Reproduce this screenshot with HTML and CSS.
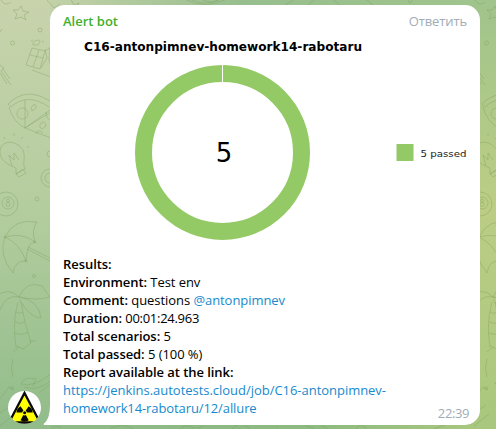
FILE: index.html
```html
<!DOCTYPE html>
<html lang="en">
<head>
<meta charset="utf-8">
<title>Alert bot</title>
<link rel="stylesheet" href="styles.css">
</head>
<body>
<main class="chat">
  <svg class="wallpaper" viewBox="0 0 496 429" aria-hidden="true">
    <defs>
      <g id="doodles">
        <path d="M1 0q4 7 10 2M47 0l7 8 6-4"/>
        <path d="M21 6l2 5 6 1-5 3 2 5-5-3-6 2 2-5-4-4 5 0z"/>
        <circle cx="40" cy="30" r="2"/><circle cx="12.500" cy="43" r="2"/><path d="M0 32l2-3"/>
        <path d="M33 45q-1-4 5-5 4 1 0 5zM31 41l2-1M42 41l2 1"/>
        <path d="M32 48l13 3-5 18-14-4zM30 55l13 3M39 50l-6 17M45 51l6-4 1 4M32 70l27 10M41 68l6-10-2-9M50 47l-1 12 2 9"/>
        <path d="M0 65l4 3-3 3 10 14M0 73l7 11M3 69l7 10"/>
        <path d="M8 104Q26 86 50 101L59 108M8 104l3 3Q27 92 49 107M9 107Q13 122 25 128L51 138M25 100v28l25-18M25 128l26-16"/>
        <circle cx="22.500" cy="113.500" r="5.500"/><path d="M33 105q4-1 3 3l-4 3q-2-4 1-6M41 123q4-3 5 3l-4 3q-4-2-1-6M46 112q0 7 5 8M36 134q2-6 7-1"/>
        <path d="M16 168C6 164-3 158 1 147 6 139 18 142 23 150c3 8-1 13 2 19l-9 5zM12 166l-3-11 5 5 0-7 5 7M16 174l7-5 3 4-7 4z"/>
        <path d="M4 137l1 2M14 133v3M23 137l-2 2M27 147l2 0"/>
        <circle cx="50" cy="154" r="3"/><circle cx="50" cy="178" r="9"/><circle cx="50" cy="178" r="5"/>
        <circle cx="6" cy="204" r="12"/><circle cx="8" cy="203" r="6"/><circle cx="8" cy="200.500" r="1.500"/><circle cx="8" cy="204.500" r="2"/><circle cx="37" cy="199" r="2"/>
        <path d="M5 237Q14 218 37 222Q31 230 35 242Q27 242 26 261Q15 260 13 273Q-2 255 5 237Q20 244 26 261M5 237Q22 232 35 242M27 249l23 12M28 247l22 11"/>
        <circle cx="5" cy="237" r="1"/><circle cx="35" cy="242" r="1"/><circle cx="26" cy="261" r="1"/><circle cx="34" cy="276" r="1.500"/>
        <path d="M19 297Q8 286-4 297M19 297Q6 294 0 310M19 297Q26 280 42 286L50 297Q38 301 19 297Q39 300 41 318Q30 318 19 299M18 302q-6 20-2 45M21 302q3 20 10 41l-8 6-7-3M16 312q4 3 7 0M15 322q6 3 10 0M15 333q7 3 13-1M13 352l6-5M30 341l6 0M13 359q-3 9 0 18"/>
        <circle cx="12" cy="388" r="1.500"/><path d="M21 384q3-8 15-5l-3 7M21 384q13 4 31-11M24 387q14 5 28-7M0 399l9-12 5 3M0 413l12-8M39 393l12-9M0 426l15-12"/>
      </g>
    </defs>
    <use href="#doodles"/>
    <use href="#doodles" x="474"/>
    <path d="M71 0l3 5 5-2-1 2M187 0q18 9 38 0M192 0q15 6 26 0M203 0q8 4 16 0M285 5l9-5M308 5l6-5M340 5l-7-5M408 0q2 6 4 0M367 0l6 5"/>
    <path d="M51 429q4-5 10-1M110 429q12-7 24 0M180 429q5-6 14-1M197 429l9-5M232 429q8-8 14-3l4 3M276 427h2M305 425l9 4M321 425l7 4M356 429q5-8 10 0M433 429l12-4"/>
  </svg>
  <svg class="avatar" viewBox="0 0 34 34" role="img" aria-label="Alert bot avatar">
    <defs><clipPath id="face"><circle cx="16.500" cy="16.500" r="16.500"/></clipPath></defs>
    <circle cx="16.500" cy="16.500" r="16.500" fill="#fff"/>
    <g clip-path="url(#face)">
      <path d="M16.500 2L32 31.500H1z" fill="#ff0" stroke="#080808" stroke-width="2.300"/>
      <path d="M14.300 21.500H8.500A8 8 0 0 1 12.500 15.200L15.500 19.500A2.500 2.500 0 0 0 14.300 21.500M18.700 21.500h6A8 8 0 0 0 20.700 15.200L17.700 19.500A2.500 2.500 0 0 1 18.700 21.500M15.300 24L12.500 29.200A8 8 0 0 0 20.700 29.200L17.900 24A2.500 2.500 0 0 1 15.300 24" fill="#080808"/>
      <circle cx="16.600" cy="21.700" r="1.500" fill="#080808"/>
    </g>
  </svg>
  <article class="bubble">
    <svg class="tail" viewBox="0 0 9 20" aria-hidden="true"><path d="M9 0V20H2Q0 20 1 18.500Q7 14 7 0z"/></svg>
    <header class="head"><span class="name">Alert bot</span><span class="reply">Ответить</span></header>
    <svg class="chart" viewBox="0 0 404 220">
      <text class="title" x="21" y="15.500" textLength="278" lengthAdjust="spacingAndGlyphs">C16-antonpimnev-homework14-rabotaru</text>
      <circle class="ring" cx="159.500" cy="117.500" r="79"/>
      <path class="split" d="M159.500 30v17"/>
      <text class="total" x="161" y="127" text-anchor="middle">5</text>
      <rect class="key" x="333.500" y="109" width="17" height="17"/>
      <text class="legend" x="357.500" y="122" textLength="46" lengthAdjust="spacingAndGlyphs">5 passed</text>
    </svg>
    <div class="message">
      <div><b>Results:</b></div>
      <div><b>Environment:</b> Test env</div>
      <div><b>Comment:</b> questions <a>@antonpimnev</a></div>
      <div><b>Duration:</b> <span class="digits">00:01:24.963</span></div>
      <div><b>Total scenarios:</b> 5</div>
      <div><b>Total passed:</b> 5 (100 %)</div>
      <div><b>Report available at the link:</b></div>
      <div><a class="url">https://jenkins.autotests.cloud/job/C16-antonpimnev-<br><span class="url-end">homework14-rabotaru/12/allure</span></a></div>
    </div>
    <time class="time">22:39</time>
  </article>
</main>
</body>
</html>
```
FILE: styles.css
```css
* { box-sizing: border-box; }
body { margin: 0; font: 13px/18px "Open Sans", sans-serif; color: #000; }
.chat {
  position: relative;
  display: flex;
  align-items: flex-end;
  width: 496px;
  height: 429px;
  padding: 5px 16px 4px 8px;
  overflow: hidden;
  background:
    linear-gradient(#a0c48c 0%, #bccd84 48%, #a9c77e 100%) right / 16px 100% no-repeat,
    linear-gradient(90deg, #c3d1a9 0%, #97be8e 45%, #a0c48c 100%) 50px 0 / 430px 20px no-repeat,
    linear-gradient(90deg, #8fbb88 0%, #8cba80 60%, #a9c77e 100%) 50px 100% / 430px 20px no-repeat,
    linear-gradient(#c8d3ac 0%, #b4cd9f 48%, #91bc8a 100%);
}
.wallpaper {
  position: absolute;
  inset: 0;
  width: 496px;
  height: 429px;
  fill: none;
  stroke: #7f9f61;
  stroke-opacity: .4;
  stroke-width: 1;
}
.avatar { position: relative; width: 34px; height: 34px; margin-right: 8px; flex: none; }
.bubble {
  position: relative;
  width: 430px;
  height: 420px;
  padding: 7px 13px;
  background: #fff;
  border-radius: 15px 15px 15px 0;
}
.tail { position: absolute; left: -7px; bottom: 0; width: 9px; height: 20px; fill: #fff; }
.head { display: flex; justify-content: space-between; height: 18px; }
.name { color: #42b02d; font-weight: 600; }
.reply { color: #a0acb6; letter-spacing: -.1px; }
.chart { display: block; width: 404px; height: 220px; margin-top: 5px; overflow: visible; font-family: "DejaVu Sans", sans-serif; }
.title { font-size: 11.5px; font-weight: 700; }
.ring { fill: none; stroke: #94ca66; stroke-width: 17; }
.split { stroke: #fff; stroke-width: 1; }
.total { font-size: 26px; }
.key { fill: #94ca66; }
.legend { font-size: 9.5px; fill: #222; }
.message { white-space: nowrap; letter-spacing: -.06px; }
.message b { font-weight: 600; }
.message a { color: #168acd; }
.message .digits { letter-spacing: -.28px; }
.message .url { letter-spacing: -.03px; }
.message .url-end { letter-spacing: -.1px; }
.time { position: absolute; right: 11px; bottom: 3px; color: #a0acb6; letter-spacing: -.4px; }
```
